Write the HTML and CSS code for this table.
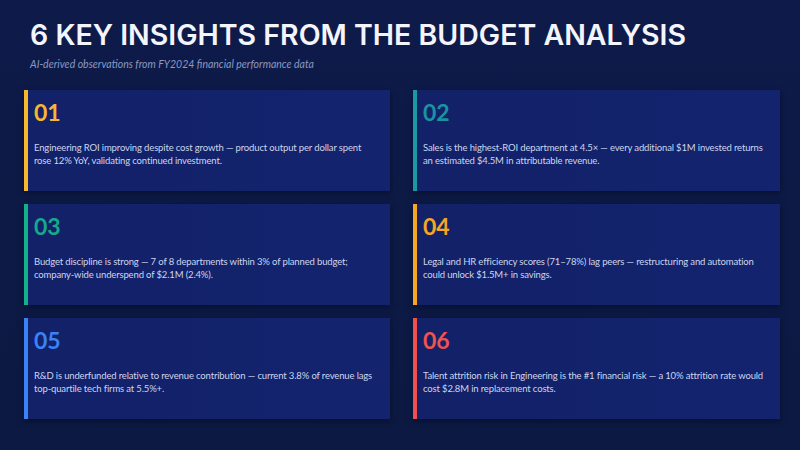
FILE: index.html
```html
<!DOCTYPE html>
<html lang="en">
<head>
<meta charset="utf-8">
<title>6 Key Insights</title>
<link rel="stylesheet" href="styles.css">
</head>
<body>
<main class="slide">
  <h1 class="title">6 KEY INSIGHTS FROM THE BUDGET ANALYSIS</h1>
  <p class="subtitle">AI-derived observations from FY2024 financial performance data</p>
  <section class="grid">
    <article class="card amber">
      <div class="num">01</div>
      <p class="text">Engineering ROI improving despite cost growth — product output per dollar spent rose 12% YoY, validating continued investment.</p>
    </article>
    <article class="card teal">
      <div class="num">02</div>
      <p class="text">Sales is the highest-ROI department at 4.5× — every additional $1M invested returns an estimated $4.5M in attributable revenue.</p>
    </article>
    <article class="card green">
      <div class="num">03</div>
      <p class="text">Budget discipline is strong — 7 of 8 departments within 3% of planned budget; company-wide underspend of $2.1M (2.4%).</p>
    </article>
    <article class="card orange">
      <div class="num">04</div>
      <p class="text">Legal and HR efficiency scores (71–78%) lag peers — restructuring and automation could unlock $1.5M+ in savings.</p>
    </article>
    <article class="card blue">
      <div class="num">05</div>
      <p class="text">R&amp;D is underfunded relative to revenue contribution — current 3.8% of revenue lags top-quartile tech firms at 5.5%+.</p>
    </article>
    <article class="card red">
      <div class="num">06</div>
      <p class="text">Talent attrition risk in Engineering is the #1 financial risk — a 10% attrition rate would cost $2.8M in replacement costs.</p>
    </article>
  </section>
</main>
</body>
</html>
```
FILE: styles.css
```css
html, body {
  margin: 0;
  padding: 0;
}
body {
  width: 800px;
  height: 450px;
  overflow: hidden;
  background: #0d1a45;
  font-family: Lato, "Liberation Sans", sans-serif;
}
.slide {
  box-sizing: border-box;
  width: 800px;
  height: 450px;
  padding: 18px 20px 0 24px;
  background: linear-gradient(180deg, #0e1b4a 0%, #0c1942 100%);
}
.title {
  margin: 0 0 0 6px;
  font-family: Inter, "Liberation Sans", sans-serif;
  font-weight: 600;
  font-size: 28.5px;
  line-height: 34px;
  color: #f3f5fb;
  letter-spacing: 0;
}
.subtitle {
  margin: 6px 0 0 6px;
  font-style: italic;
  font-size: 10.5px;
  line-height: 12px;
  color: #8a99c2;
}
.grid {
  margin-top: 20px;
  display: grid;
  grid-template-columns: 366px 367px;
  grid-auto-rows: 101px;
  column-gap: 23px;
  row-gap: 13px;
}
.card {
  box-sizing: border-box;
  background: linear-gradient(90deg, #122168 0%, #13236e 100%);
  border-left: 4px solid #f5b82e;
  padding: 11px 12px 0 6px;
  box-shadow: 0 2px 6px rgba(3, 8, 28, 0.55);
}
.num {
  font-weight: 700;
  font-size: 23px;
  line-height: 23px;
}
.text {
  margin: 18px 0 0 0;
  font-size: 9.5px;
  letter-spacing: -0.15px;
  line-height: 12.5px;
  color: #cdd5ec;
}
.amber { border-left-color: #f5b82e; }
.amber .num { color: #f5b731; }
.teal { border-left-color: #1a98a4; }
.teal .num { color: #1a93a0; }
.green { border-left-color: #13b08c; }
.green .num { color: #17a88b; }
.orange { border-left-color: #f5a623; }
.orange .num { color: #f5a623; }
.blue { border-left-color: #3b82f6; }
.blue .num { color: #3b82f6; }
.red { border-left-color: #ef4f4f; }
.red .num { color: #ef5350; }
```
